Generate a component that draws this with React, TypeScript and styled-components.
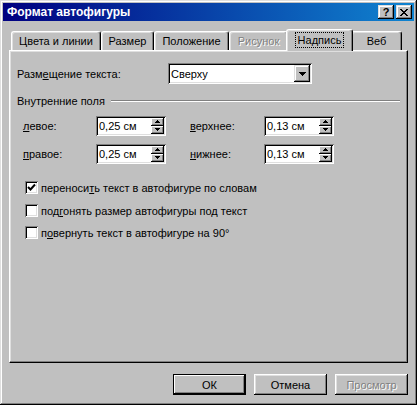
import styled, { createGlobalStyle } from 'styled-components';

const GlobalStyle = createGlobalStyle`
  html, body {
    margin: 0;
    padding: 0;
    background: #c0c0c0;
  }
  * {
    box-sizing: border-box;
  }
`;

const raised = `
  background: #c0c0c0;
  box-shadow: inset -1px -1px #000, inset 1px 1px #dfdfdf, inset -2px -2px #808080, inset 2px 2px #fff;
`;

const sunken = `
  background: #fff;
  box-shadow: inset 1px 1px #808080, inset -1px -1px #fff, inset 2px 2px #000, inset -2px -2px #dfdfdf;
`;

const Window = styled.div`
  width: 417px;
  height: 405px;
  padding: 3px;
  display: flex;
  flex-direction: column;
  font-family: 'Liberation Sans', Arial, sans-serif;
  font-size: 11px;
  color: #000;
  ${raised}
`;

const TitleBar = styled.div`
  height: 18px;
  display: flex;
  align-items: center;
  padding: 0 2px 0 4px;
  background: linear-gradient(90deg, #000080, #1084d0);
  color: #fff;
  font-weight: bold;
  font-size: 12px;
`;

const TitleText = styled.div`
  flex: 1;
`;

const TitleButton = styled.div`
  width: 16px;
  height: 14px;
  margin-left: 2px;
  display: flex;
  align-items: center;
  justify-content: center;
  color: #000;
  font-size: 11px;
  font-weight: bold;
  ${raised}
`;

const TabRow = styled.div`
  height: 21px;
  margin: 8px 6px 0;
  padding-left: 2px;
  display: flex;
  align-items: flex-end;
`;

const Tab = styled.div<{ $w: number; $active?: boolean; $disabled?: boolean }>`
  position: relative;
  width: ${(p) => (p.$active ? p.$w + 4 : p.$w)}px;
  height: ${(p) => (p.$active ? 22 : 19)}px;
  margin: ${(p) => (p.$active ? '0 -2px -1px' : '0')};
  z-index: ${(p) => (p.$active ? 1 : 0)};
  display: flex;
  align-items: center;
  justify-content: center;
  padding-bottom: ${(p) => (p.$active ? 2 : 0)}px;
  background: #c0c0c0;
  border-top: 1px solid #fff;
  border-left: 1px solid #fff;
  border-right: 1px solid #000;
  border-radius: 3px 3px 0 0;
  box-shadow: inset -1px 0 #808080, inset 1px 1px #dfdfdf;
  color: ${(p) => (p.$disabled ? '#808080' : '#000')};
  text-shadow: ${(p) => (p.$disabled ? '1px 1px #fff' : 'none')};
`;

const Focus = styled.span`
  outline: 1px dotted #000;
  padding: 0 2px;
  line-height: 14px;
`;

const Panel = styled.div`
  height: 313px;
  margin: 0 6px;
  padding: 12px 7px 0;
  border-top: 1px solid #fff;
  border-left: 1px solid #fff;
  border-right: 1px solid #000;
  border-bottom: 1px solid #000;
  box-shadow: inset -1px -1px #808080, inset 1px 1px #dfdfdf;
  display: flex;
  flex-direction: column;
`;

const Row = styled.div<{ $indent?: number; $top?: number }>`
  display: flex;
  align-items: center;
  height: 21px;
  padding-left: ${(p) => p.$indent ?? 0}px;
  margin-top: ${(p) => p.$top ?? 0}px;
`;

const Label = styled.div<{ $w: number }>`
  width: ${(p) => p.$w}px;
  white-space: nowrap;
`;

const Select = styled.div`
  width: 144px;
  height: 21px;
  padding: 2px;
  display: flex;
  align-items: center;
  ${sunken}
`;

const SelectText = styled.div`
  flex: 1;
  padding-left: 1px;
`;

const DropButton = styled.div`
  width: 16px;
  height: 17px;
  display: flex;
  align-items: center;
  justify-content: center;
  ${raised}
`;

const GroupTitle = styled.div`
  margin-top: 10px;
  height: 13px;
  display: flex;
  align-items: center;
  gap: 6px;
`;

const GroupLine = styled.div`
  flex: 1;
  border-top: 1px solid #808080;
  border-bottom: 1px solid #fff;
`;

const SpinBox = styled.div<{ $gap?: number }>`
  width: 70px;
  height: 20px;
  padding: 2px 2px 2px 3px;
  margin-right: ${(p) => p.$gap ?? 0}px;
  display: flex;
  align-items: center;
  ${sunken}
`;

const SpinText = styled.div`
  flex: 1;
`;

const SpinButtons = styled.div`
  width: 13px;
  height: 16px;
  display: flex;
  flex-direction: column;
`;

const SpinHalf = styled.div`
  flex: 1;
  display: flex;
  align-items: center;
  justify-content: center;
  background: #c0c0c0;
  box-shadow: inset -1px -1px #000, inset 1px 1px #fff, inset -2px -2px #808080;
`;

const CheckRow = styled.div<{ $top: number }>`
  display: flex;
  align-items: center;
  gap: 3px;
  height: 13px;
  margin-top: ${(p) => p.$top}px;
  padding-left: 8px;
`;

const CheckBox = styled.div`
  width: 13px;
  height: 13px;
  display: flex;
  align-items: center;
  justify-content: center;
  ${sunken}
`;

const Footer = styled.div`
  margin-top: 11px;
  padding-right: 6px;
  display: flex;
  justify-content: flex-end;
  gap: 8px;
`;

const Button = styled.div<{ $default?: boolean; $disabled?: boolean }>`
  width: 73px;
  height: 21px;
  display: flex;
  align-items: center;
  justify-content: center;
  color: ${(p) => (p.$disabled ? '#808080' : '#000')};
  text-shadow: ${(p) => (p.$disabled ? '1px 1px #fff' : 'none')};
  background: #c0c0c0;
  box-shadow: ${(p) =>
    p.$default
      ? 'inset 0 0 0 1px #000, inset -2px -2px #000, inset 2px 2px #fff, inset -3px -3px #808080'
      : 'inset -1px -1px #000, inset 1px 1px #fff, inset -2px -2px #808080, inset 2px 2px #dfdfdf'};
`;

const U = styled.span`
  text-decoration: underline;
  text-underline-offset: 1px;
`;

const Arrow = ({ up, w = 7 }: { up?: boolean; w?: number }) => {
  const h = Math.ceil(w / 2);
  return (
    <svg width={w} height={h} viewBox={`0 0 ${w} ${h}`} shapeRendering="crispEdges">
      <polygon
        points={up ? `${w / 2},0 ${w},${h} 0,${h}` : `0,0 ${w},0 ${w / 2},${h}`}
        fill="#000"
      />
    </svg>
  );
};

const Spin = ({ value, gap }: { value: string; gap?: number }) => (
  <SpinBox $gap={gap}>
    <SpinText>{value}</SpinText>
    <SpinButtons>
      <SpinHalf>
        <Arrow up w={5} />
      </SpinHalf>
      <SpinHalf>
        <Arrow w={5} />
      </SpinHalf>
    </SpinButtons>
  </SpinBox>
);

const Check = ({ checked }: { checked?: boolean }) => (
  <CheckBox>
    {checked && (
      <svg width="9" height="9" viewBox="0 0 9 9">
        <polyline points="1,4 3.5,6.5 8,1.5" fill="none" stroke="#000" strokeWidth="2" />
      </svg>
    )}
  </CheckBox>
);

const tabs = [
  { label: 'Цвета и линии', w: 90 },
  { label: 'Размер', w: 53 },
  { label: 'Положение', w: 75 },
  { label: 'Рисунок', w: 59, disabled: true },
  { label: 'Надпись', w: 63, active: true },
  { label: 'Веб', w: 51 },
];

export default function App() {
  return (
    <>
      <GlobalStyle />
      <Window>
        <TitleBar>
          <TitleText>Формат автофигуры</TitleText>
          <TitleButton>?</TitleButton>
          <TitleButton>
            <svg width="8" height="7" viewBox="0 0 8 7" shapeRendering="crispEdges">
              <path d="M0 0h2v1h-2zM6 0h2v1h-2zM1 1h2v1h-2zM5 1h2v1h-2zM2 2h4v1h-4zM3 3h2v1h-2zM2 4h4v1h-4zM1 5h2v1h-2zM5 5h2v1h-2zM0 6h2v1h-2zM6 6h2v1h-2z" fill="#000" />
            </svg>
          </TitleButton>
        </TitleBar>

        <TabRow>
          {tabs.map((t) => (
            <Tab key={t.label} $w={t.w} $active={t.active} $disabled={t.disabled}>
              {t.active ? <Focus>{t.label}</Focus> : t.label}
            </Tab>
          ))}
        </TabRow>

        <Panel>
          <Row>
            <Label $w={151}>
              Разм<U>е</U>щение текста:
            </Label>
            <Select>
              <SelectText>Сверху</SelectText>
              <DropButton>
                <Arrow />
              </DropButton>
            </Select>
          </Row>

          <GroupTitle>
            Внутренние поля
            <GroupLine />
          </GroupTitle>

          <Row $indent={6} $top={8}>
            <Label $w={73}>
              <U>л</U>евое:
            </Label>
            <Spin value="0,25 см" gap={24} />
            <Label $w={74}>
              <U>в</U>ерхнее:
            </Label>
            <Spin value="0,13 см" />
          </Row>
          <Row $indent={6} $top={7}>
            <Label $w={73}>
              <U>п</U>равое:
            </Label>
            <Spin value="0,25 см" gap={24} />
            <Label $w={74}>
              <U>н</U>ижнее:
            </Label>
            <Spin value="0,13 см" />
          </Row>

          <CheckRow $top={17}>
            <Check checked />
            <span>
              переноси<U>т</U>ь текст в автофигуре по словам
            </span>
          </CheckRow>
          <CheckRow $top={10}>
            <Check />
            <span>
              под<U>г</U>онять размер автофигуры под текст
            </span>
          </CheckRow>
          <CheckRow $top={9}>
            <Check />
            <span>
              п<U>о</U>вернуть текст в автофигуре на 90°
            </span>
          </CheckRow>
        </Panel>

        <Footer>
          <Button $default>ОК</Button>
          <Button>Отмена</Button>
          <Button $disabled>Просмотр</Button>
        </Footer>
      </Window>
    </>
  );
}
